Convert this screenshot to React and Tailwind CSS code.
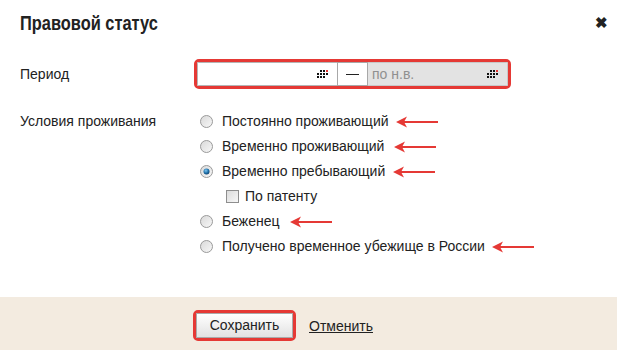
import React from "react";

function GridIcon() {
  // 4x3 dot calendar glyph, top-right dot red
  const cells = [0, 1, 1, 2, 1, 1, 1, 1, 1, 1, 1, 0];
  return (
    <div className="grid grid-cols-4 gap-px w-[11px]">
      {cells.map((c, i) => (
        <div
          key={i}
          className={
            c === 2 ? "w-[2px] h-[2px] bg-[#e53935]" : c === 1 ? "w-[2px] h-[2px] bg-[#111]" : "w-[2px] h-[2px]"
          }
        />
      ))}
    </div>
  );
}

function Radio({ checked }) {
  return (
    <svg width="13" height="13" viewBox="0 0 13 13" className="shrink-0">
      <defs>
        <linearGradient id="rg" x1="0" y1="0" x2="1" y2="1">
          <stop offset="0" stopColor="#d8d8d8" />
          <stop offset="1" stopColor="#f8f8f8" />
        </linearGradient>
        <radialGradient id="dot" cx="0.4" cy="0.35" r="0.7">
          <stop offset="0" stopColor="#7fc6f0" />
          <stop offset="0.6" stopColor="#1e6fa8" />
          <stop offset="1" stopColor="#0b3c66" />
        </radialGradient>
      </defs>
      <circle cx="6.5" cy="6.5" r="6" fill="url(#rg)" stroke="#9a9a9a" strokeWidth="1" />
      {checked && <circle cx="6.5" cy="6.5" r="3" fill="url(#dot)" />}
    </svg>
  );
}

function Arrow({ className }) {
  return (
    <svg width="42" height="12" viewBox="0 0 42 12" className={className}>
      <path d="M3 6 L42 6" stroke="#e53935" strokeWidth="2" />
      <path d="M0 6 L11 0.5 L8 6 L11 11.5 Z" fill="#e53935" />
    </svg>
  );
}

const options = [
  { label: "Постоянно проживающий", arrow: "ml-[7px]" },
  { label: "Временно проживающий", arrow: "ml-[10px]" },
  { label: "Временно пребывающий", arrow: "ml-[8px]", checked: true },
  { label: "Беженец", arrow: "ml-[10px]" },
  { label: "Получено временное убежище в России", arrow: "ml-[7px]" },
];

function OptionRow({ o }) {
  return (
    <div className="flex items-center h-[25px]">
      <Radio checked={o.checked} />
      <span className="ml-[9px]">{o.label}</span>
      <Arrow className={o.arrow} />
    </div>
  );
}

export default function App() {
  return (
    <div className="w-[617px] h-[350px] bg-white flex flex-col text-[#222] font-['Liberation_Sans',Arial,sans-serif] text-[14px]">
      <div className="flex items-center justify-between pl-[20px] pr-[9px] pt-[6px] h-[40px]">
        <h1 className="inline-block origin-left scale-x-[0.82] text-[20px] font-bold leading-[24px] text-[#222]">
          Правовой статус
        </h1>
        <span className="text-[15px] font-bold leading-none text-[#222] -mt-[2px]">✖</span>
      </div>

      <div className="flex items-center pl-[20px] mt-[19px]">
        <div className="w-[174px]">Период</div>
        <div className="flex h-[30px] w-[317px] border-[3px] border-[#e53935] rounded-[5px] overflow-hidden">
          <div className="flex items-center justify-end w-[140px] bg-white border-y border-l border-[#b5b5b5] pr-[9px]">
            <GridIcon />
          </div>
          <div className="flex items-center justify-center w-[31px] bg-white border border-[#a8a8a8]">
            <div className="w-[13px] h-px bg-[#222]" />
          </div>
          <div className="flex items-center justify-between flex-1 bg-[#e3e3e3] border-y border-r border-[#c8c8c8] pl-[4px] pr-[9px] text-[#909090]">
            <span>по н.в.</span>
            <GridIcon />
          </div>
        </div>
      </div>

      <div className="flex pl-[20px] mt-[20px]">
        <div className="w-[180px] leading-[25px]">Условия проживания</div>
        <div className="flex flex-col">
          {options.slice(0, 3).map((o) => (
            <OptionRow key={o.label} o={o} />
          ))}
          <div className="flex items-center h-[25px] pl-[26px]">
            <div className="w-[13px] h-[13px] border border-[#8e8e8e] bg-gradient-to-br from-[#dcdcdc] to-[#f7f7f7]" />
            <span className="ml-[6px]">По патенту</span>
          </div>
          {options.slice(3).map((o) => (
            <OptionRow key={o.label} o={o} />
          ))}
        </div>
      </div>

      <div className="mt-auto h-[53px] bg-[#f3ebe0] flex items-start pt-[13px] pl-[193px]">
        <div className="border-[3px] border-[#e53935] rounded-[5px]">
          <button className="h-[25px] w-[97px] bg-gradient-to-b from-white to-[#e2e2e2] border border-[#aaa] text-[14px] text-[#222]">
            Сохранить
          </button>
        </div>
        <a className="ml-[13px] mt-[6px] text-[14px] underline text-[#222]">Отменить</a>
      </div>
    </div>
  );
}
